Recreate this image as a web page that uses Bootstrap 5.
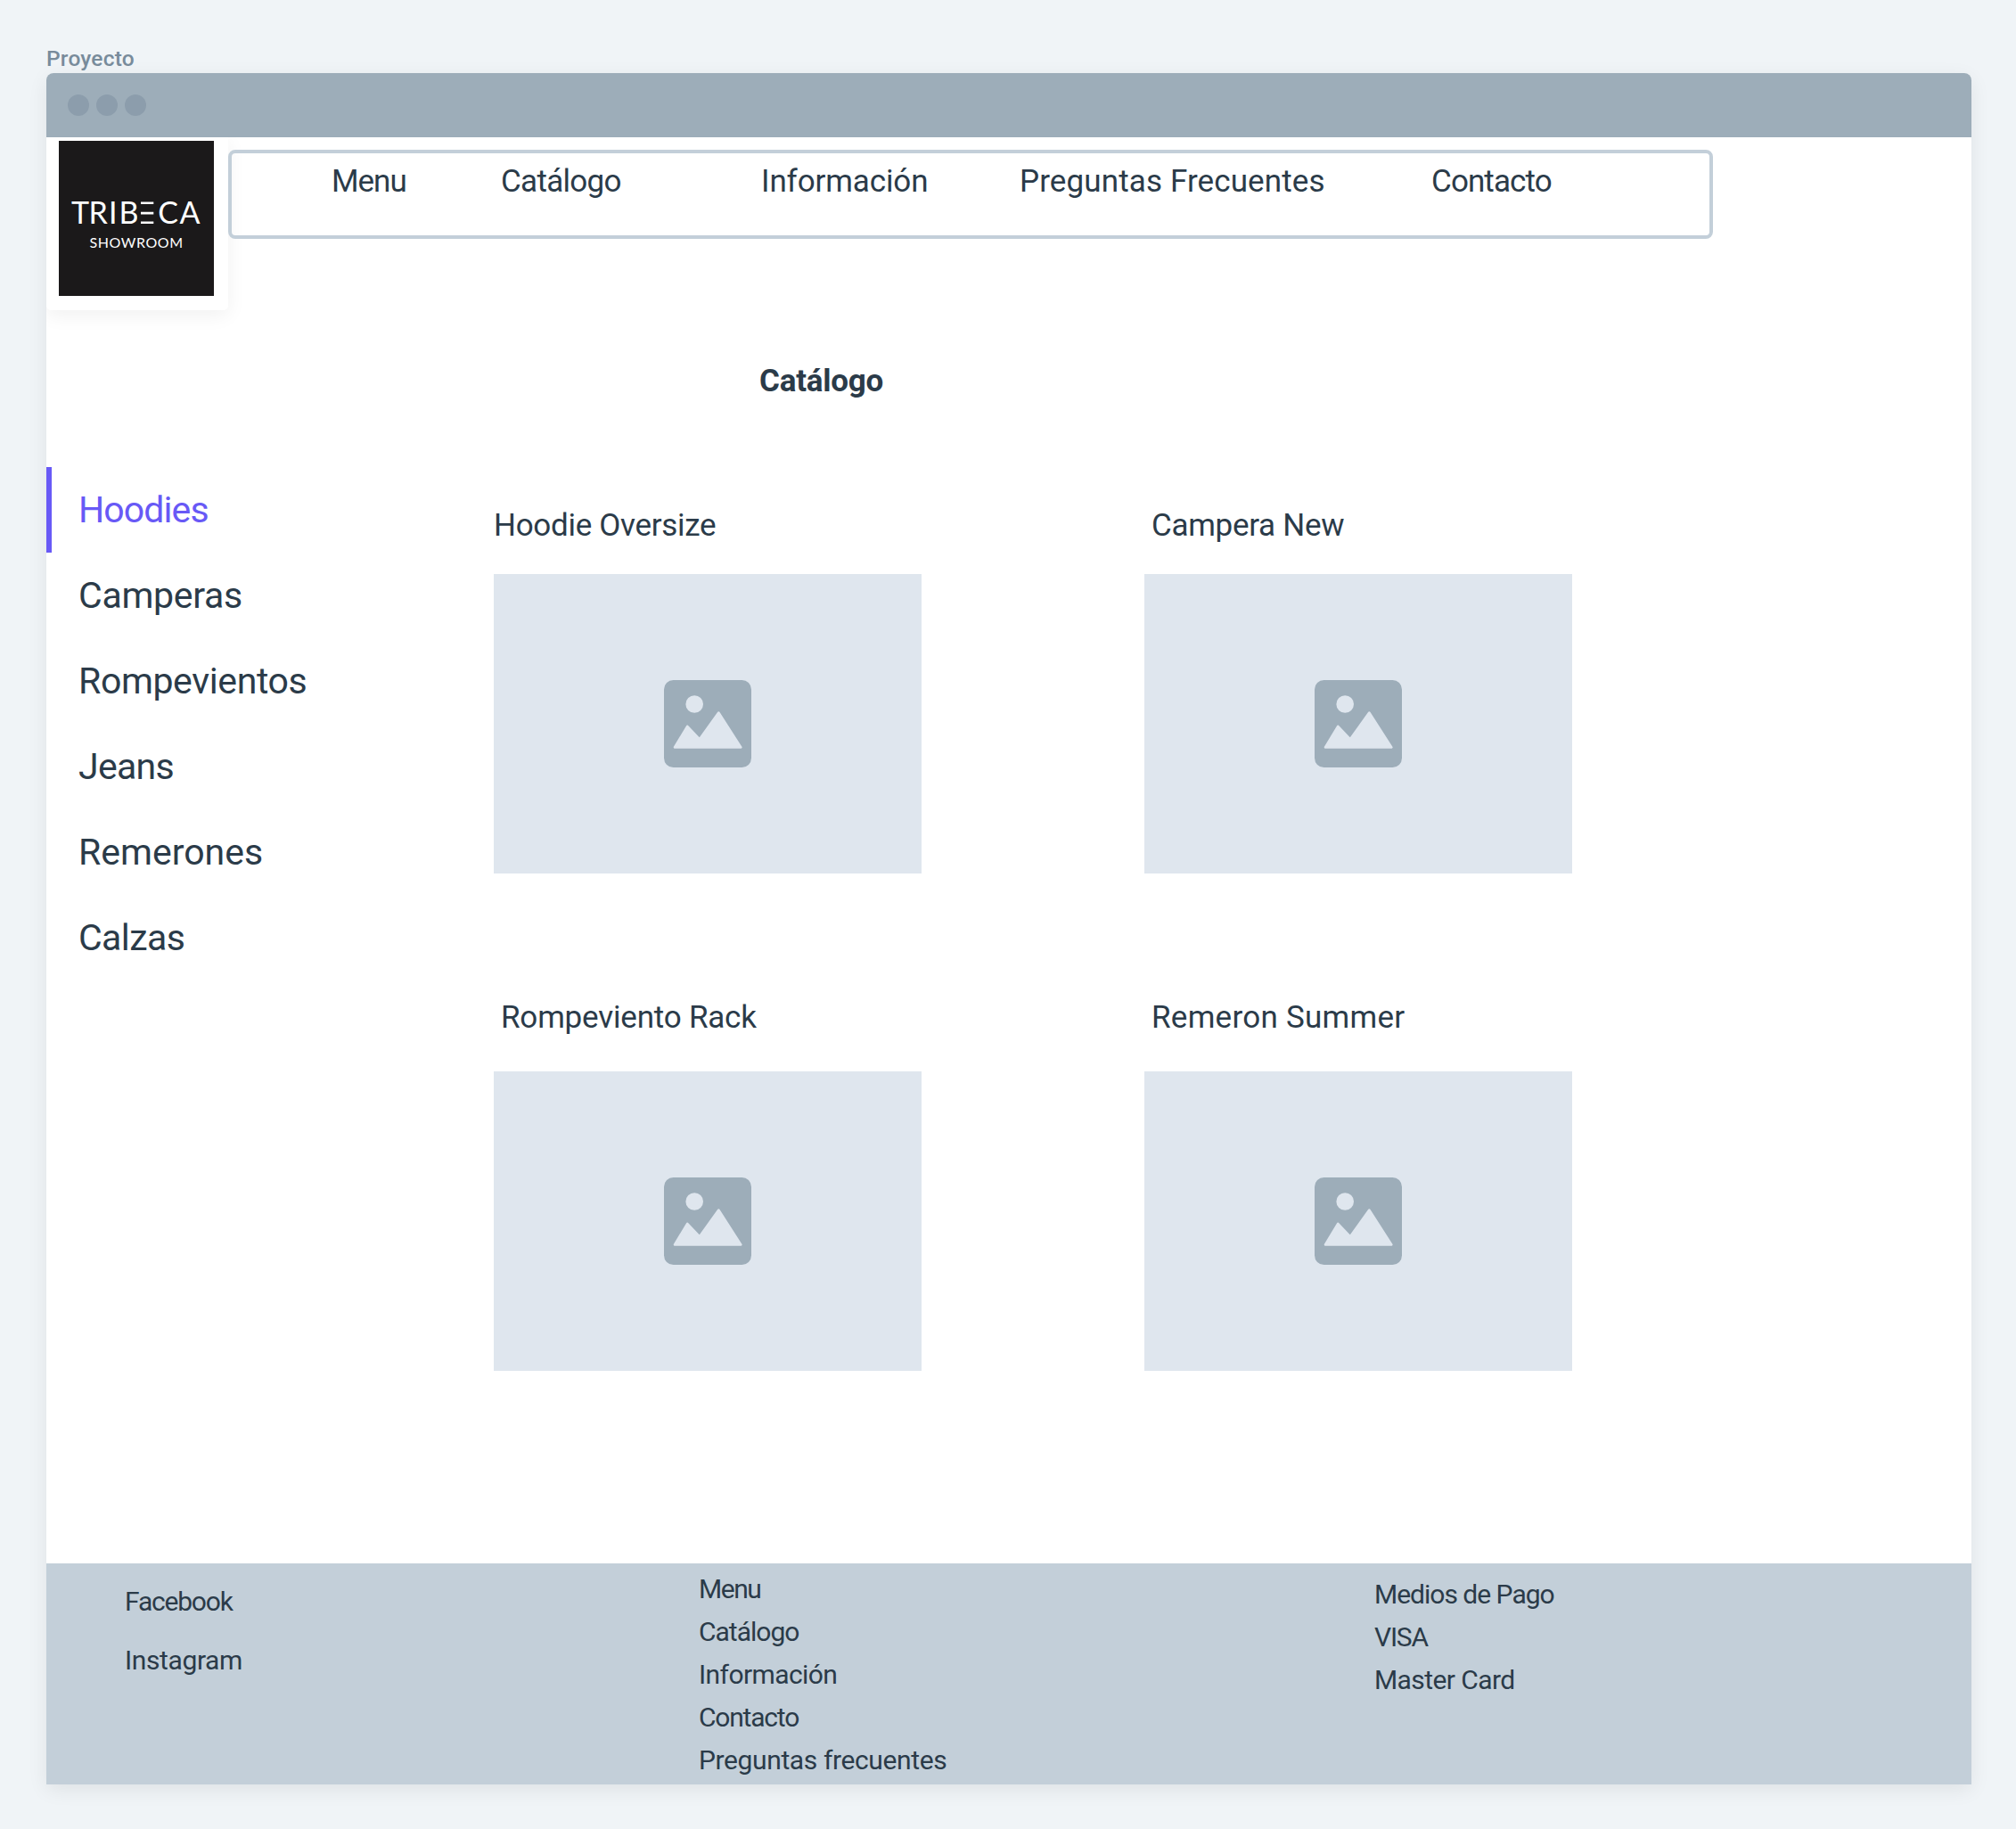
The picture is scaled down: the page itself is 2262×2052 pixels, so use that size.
<!DOCTYPE html>
<html lang="es">
<head>
<meta charset="utf-8">
<meta name="viewport" content="width=device-width, initial-scale=1">
<title>Proyecto</title>
<link href="https://cdn.jsdelivr.net/npm/bootstrap@5.3.0/dist/css/bootstrap.min.css" rel="stylesheet">
<style>
  body { background: #f0f4f7; color: #2b3b49; font-family: Roboto, "Liberation Sans", sans-serif; padding: 52px 50px 50px 52px; }
  a { color: inherit; text-decoration: none; }
  .board-label { font-size: 24.5px; font-weight: 500; line-height: 28px; letter-spacing: .2px; color: #788b9b; margin-bottom: 2px; }

  .browser { width: 2160px; height: 1920px; border-radius: 8px 8px 0 0; box-shadow: 0 6px 22px rgba(0, 0, 0, .075); }
  .browser-bar { height: 72px; padding-left: 24px; gap: 8px; background: #9dadb9; border-radius: 8px 8px 0 0; }
  .browser-bar span { width: 24px; height: 24px; background: #8c9dac; }
  .site { min-height: 0; }

  .logo-box { width: 204px; height: 194px; padding: 4px 0 0 14px; border-radius: 0 0 5px 5px; box-shadow: 0 6px 22px rgba(0, 0, 0, .06); }
  .main-nav { width: 1666px; height: 100px; margin-top: 14px; padding: 11px 0 0 112px; border: 4px solid #c3cfd9; border-radius: 8px;
              display: grid; grid-template-columns: 190px 292px 290px 462px auto; align-items: start; font-size: 35px; line-height: 42px; white-space: nowrap; }
  .page-title { margin: 59px 0 75px; padding-left: 800px; font-size: 35px; font-weight: 700; line-height: 42px; letter-spacing: -.25px; }

  .side-menu { width: 502px; font-size: 41px; line-height: 96px; }
  .side-menu a { border-left: 6px solid transparent; padding-left: 30px; }
  .side-menu a.active { border-color: #6859f6; color: #6859f6; }

  .products { display: grid; grid-template-columns: 480px 480px; column-gap: 250px; row-gap: 141px; padding-top: 45px; }
  .products h2 { font-size: 35px; font-weight: 400; line-height: 42px; margin: 0 0 33px; }
  .products .late h2 { margin-bottom: 39px; }
  .products .inset h2 { padding-left: 8px; }
  .thumb { height: 336px; background: #dfe6ee; }

  .site-footer { height: 248px; background: #c3cfd9; padding-left: 88px; font-size: 30px; line-height: 48px; }
  .site-footer ul { margin: 0; }
  .f-social { width: 644px; padding-top: 19px; }
  .f-social li + li { margin-top: 18px; }
  .f-links { width: 758px; padding-top: 5px; }
  .f-pay { padding-top: 11px; }

  .t-b { letter-spacing: -1.45px; }
  .t-c { letter-spacing: -1.2px; }
  .t-d { letter-spacing: -1px; }
  .t-e { letter-spacing: -.9px; }
  .t-f { letter-spacing: -.7px; }
  .t-g { letter-spacing: -.58px; }
  .t-h { letter-spacing: -.38px; }
  .t-i { letter-spacing: -.3px; }
  .t-j { letter-spacing: -.2px; }
  .t-k { letter-spacing: -.12px; }
  .t-l { letter-spacing: .12px; }
  .t-m { letter-spacing: .26px; }
</style>
</head>
<body>
<svg class="d-none" xmlns="http://www.w3.org/2000/svg">
  <symbol id="picture" viewBox="0 0 98 98">
    <rect width="98" height="98" rx="10.5" fill="#9dadb9"/>
    <circle cx="34.2" cy="27" r="9.8" fill="#dfe6ee"/>
    <path d="M12 75.500 26.200 51.800 40 66.300 61.300 36.500 86.300 75.500Z" fill="#dfe6ee" stroke="#dfe6ee" stroke-width="2.600" stroke-linejoin="round"/>
  </symbol>
</svg>

<div class="board-label">Proyecto</div>
<div class="browser bg-white d-flex flex-column">
  <div class="browser-bar d-flex align-items-center flex-shrink-0">
    <span class="rounded-circle"></span><span class="rounded-circle"></span><span class="rounded-circle"></span>
  </div>

  <div class="site d-flex flex-column flex-grow-1 overflow-hidden">
    <header class="d-flex align-items-start">
      <a href="#" class="logo-box bg-white d-block">
        <svg class="d-block" width="174" height="174" viewBox="0 0 174 174" fill="#fff" font-family="Lato, sans-serif">
          <rect width="174" height="174" fill="#1b191a"/>
          <text y="93" font-size="34" x="14 33.500 56 67.500 88 111.300 135.500">TRIBECA</text>
          <rect x="88" y="66" width="19" height="29" fill="#1b191a"/>
          <path d="M92 68.500h14.300v2.600H92zM92 79.800h14.300v2.600H92zM92 90.400h14.300V93H92z"/>
          <text x="34.500" y="119.700" font-size="16" textLength="104.500">SHOWROOM</text>
        </svg>
      </a>
      <nav class="main-nav">
        <a href="#" class="t-d">Menu</a>
        <a href="#" class="t-f">Catálogo</a>
        <a href="#" class="t-k">Información</a>
        <a href="#" class="t-l">Preguntas Frecuentes</a>
        <a href="#" class="t-e">Contacto</a>
      </nav>
    </header>

    <h1 class="page-title">Catálogo</h1>

    <main class="d-flex align-items-start">
      <nav class="side-menu d-flex flex-column flex-shrink-0">
        <a href="#" class="active t-e">Hoodies</a>
        <a href="#" class="t-i">Camperas</a>
        <a href="#" class="t-h">Rompevientos</a>
        <a href="#" class="t-f">Jeans</a>
        <a href="#">Remerones</a>
        <a href="#" class="t-g">Calzas</a>
      </nav>
      <section class="products">
        <article>
          <h2 class="t-i">Hoodie Oversize</h2>
          <div class="thumb d-flex align-items-center justify-content-center"><svg width="98" height="98"><use href="#picture"/></svg></div>
        </article>
        <article class="inset">
          <h2 class="t-i">Campera New</h2>
          <div class="thumb d-flex align-items-center justify-content-center"><svg width="98" height="98"><use href="#picture"/></svg></div>
        </article>
        <article class="inset late">
          <h2 class="t-j">Rompeviento Rack</h2>
          <div class="thumb d-flex align-items-center justify-content-center"><svg width="98" height="98"><use href="#picture"/></svg></div>
        </article>
        <article class="inset late">
          <h2 class="t-m">Remeron Summer</h2>
          <div class="thumb d-flex align-items-center justify-content-center"><svg width="98" height="98"><use href="#picture"/></svg></div>
        </article>
      </section>
    </main>

    <footer class="site-footer d-flex align-items-start mt-auto flex-shrink-0">
      <ul class="f-social list-unstyled">
        <li class="t-c"><a href="#">Facebook</a></li>
        <li class="t-h"><a href="#">Instagram</a></li>
      </ul>
      <ul class="f-links list-unstyled">
        <li class="t-b"><a href="#">Menu</a></li>
        <li class="t-d"><a href="#">Catálogo</a></li>
        <li class="t-g"><a href="#">Información</a></li>
        <li class="t-c"><a href="#">Contacto</a></li>
        <li class="t-h"><a href="#">Preguntas frecuentes</a></li>
      </ul>
      <ul class="f-pay list-unstyled">
        <li class="t-d">Medios de Pago</li>
        <li class="t-c">VISA</li>
        <li class="t-g">Master Card</li>
      </ul>
    </footer>
  </div>
</div>
<script src="https://cdn.jsdelivr.net/npm/bootstrap@5.3.0/dist/js/bootstrap.bundle.min.js"></script>
</body>
</html>
